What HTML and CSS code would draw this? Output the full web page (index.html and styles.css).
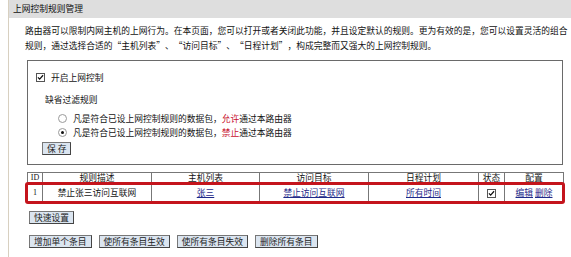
FILE: index.html
```html
<!DOCTYPE html>
<html lang="zh-CN">
<head>
<meta charset="utf-8">
<link rel="stylesheet" href="styles.css">
</head>
<body>
<div class="page">
  <div class="title">上网控制规则管理</div>
  <div class="desc">路由器可以限制内网主机的上网行为。在本页面，您可以打开或者关闭此功能，并且设定默认的规则。更为有效的是，您可以设置灵活的组合<br>规则，通过选择合适的<span class="q">“</span>主机列表<span class="q">”</span>、<span class="q">“</span>访问目标<span class="q">”</span>、<span class="q">“</span>日程计划<span class="q">”</span>，构成完整而又强大的上网控制规则。</div>
  <div class="box">
    <div class="enable"><span class="chk"><svg viewBox="0 0 9 9" width="7" height="7"><path d="M1.2 4.3 L3.4 6.6 L7.8 1.6" fill="none" stroke="#111" stroke-width="1.6"/></svg></span><span>开启上网控制</span></div>
    <div class="deflabel">缺省过滤规则</div>
    <div class="radio-row"><span class="radio"></span><span>凡是符合已设上网控制规则的数据包，<em class="red">允许</em>通过本路由器</span></div>
    <div class="radio-row"><span class="radio on"></span><span>凡是符合已设上网控制规则的数据包，<em class="red">禁止</em>通过本路由器</span></div>
    <div class="save-row"><span class="btn">保 存</span></div>
  </div>
  <div class="tablewrap">
    <table class="rules">
      <colgroup>
        <col style="width:15px"><col style="width:109px"><col style="width:108px"><col style="width:109px"><col style="width:110px"><col style="width:26px"><col style="width:59px">
      </colgroup>
      <tr class="head"><td class="id">ID</td><td>规则描述</td><td>主机列表</td><td>访问目标</td><td>日程计划</td><td>状态</td><td>配置</td></tr>
      <tr class="data"><td class="id">1</td><td>禁止张三访问互联网</td><td><a>张三</a></td><td><a>禁止访问互联网</a></td><td><a>所有时间</a></td><td><span class="chk small"><svg viewBox="0 0 9 9" width="7" height="7"><path d="M1.2 4.3 L3.4 6.6 L7.8 1.6" fill="none" stroke="#111" stroke-width="1.6"/></svg></span></td><td><a>编辑</a> <a>删除</a></td></tr>
    </table>
    <div class="highlight"></div>
  </div>
  <div class="quick"><span class="btn">快速设置</span></div>
  <div class="actions"><span class="btn">增加单个条目</span><span class="btn">使所有条目生效</span><span class="btn">使所有条目失效</span><span class="btn">删除所有条目</span></div>
</div>
</body>
</html>
```
FILE: styles.css
```css
html, body { margin: 0; padding: 0; background: #fff; }
body {
  font-family: "Noto Sans CJK SC", "Noto Sans", sans-serif;
  font-size: 8.75px;
  color: #141414;
  width: 571px;
  height: 257px;
  overflow: hidden;
}
.page {
  margin-left: 8px;
  border-left: 1px solid #d8d0c0;
  height: 257px;
}
.title {
  height: 18px;
  line-height: 18px;
  background: #dedede;
  padding-left: 4px;
  color: #111;
}
.desc {
  padding: 5px 0 0 16px;
  line-height: 15px;
  white-space: nowrap;
  color: #111;
}
.q {
  display: inline-block;
  width: 8.75px;
  text-align: center;
}
.box {
  margin: 7px 0 0 18px;
  width: 534px;
  height: 103px;
  border: 1px solid #6a6a6a;
  position: relative;
}
.enable {
  display: flex;
  align-items: center;
  gap: 6px;
  margin: 10px 0 0 8px;
  height: 12px;
}
.chk {
  width: 7px;
  height: 7px;
  border: 1px solid #555;
  background: #fff;
  display: inline-flex;
  align-items: center;
  justify-content: center;
}
.deflabel {
  margin: 11px 0 0 17px;
  height: 12px;
  line-height: 12px;
}
.radio-row {
  display: flex;
  align-items: center;
  gap: 6px;
  margin-left: 30px;
  height: 14px;
}
.deflabel + .radio-row { margin-top: 5px; }
.radio {
  width: 7px;
  height: 7px;
  border: 1px solid #9a9a9a;
  border-radius: 50%;
  background: #fff;
  position: relative;
}
.radio.on::after {
  content: "";
  position: absolute;
  left: 2px;
  top: 2px;
  width: 3px;
  height: 3px;
  border-radius: 50%;
  background: #111;
}
em.red { font-style: normal; color: #c8102e; }
.save-row { margin: 3px 0 0 14px; }
.btn {
  display: inline-block;
  height: 11px;
  line-height: 11px;
  padding: 0 4px;
  background: #dbe5f0;
  border: 1px solid #555;
  border-color: #777 #444 #444 #777;
  color: #222;
  white-space: nowrap;
}
.tablewrap {
  position: relative;
  margin: 7px 0 0 18px;
  width: 536px;
}
.rules {
  border-collapse: collapse;
  width: 536px;
  table-layout: fixed;
}
.rules td {
  border: 1px solid #777;
  text-align: center;
  padding: 0;
  white-space: nowrap;
  overflow: hidden;
}
.rules .head td { height: 10px; line-height: 10px; }
.rules .data td { height: 17px; line-height: 17px; }
.rules td.id { font-family: "Liberation Serif", serif; font-size: 8px; }
.rules a { color: #1f2a8a; text-decoration: underline; }
.chk.small { vertical-align: middle; }
.highlight {
  position: absolute;
  left: -2px;
  top: 10px;
  width: 534px;
  height: 16px;
  border: 3px solid #c4141c;
  border-radius: 3px;
}
.quick { margin: 9px 0 0 20px; }
.actions {
  margin: 11px 0 0 20px;
  display: flex;
  gap: 7px;
}
```
